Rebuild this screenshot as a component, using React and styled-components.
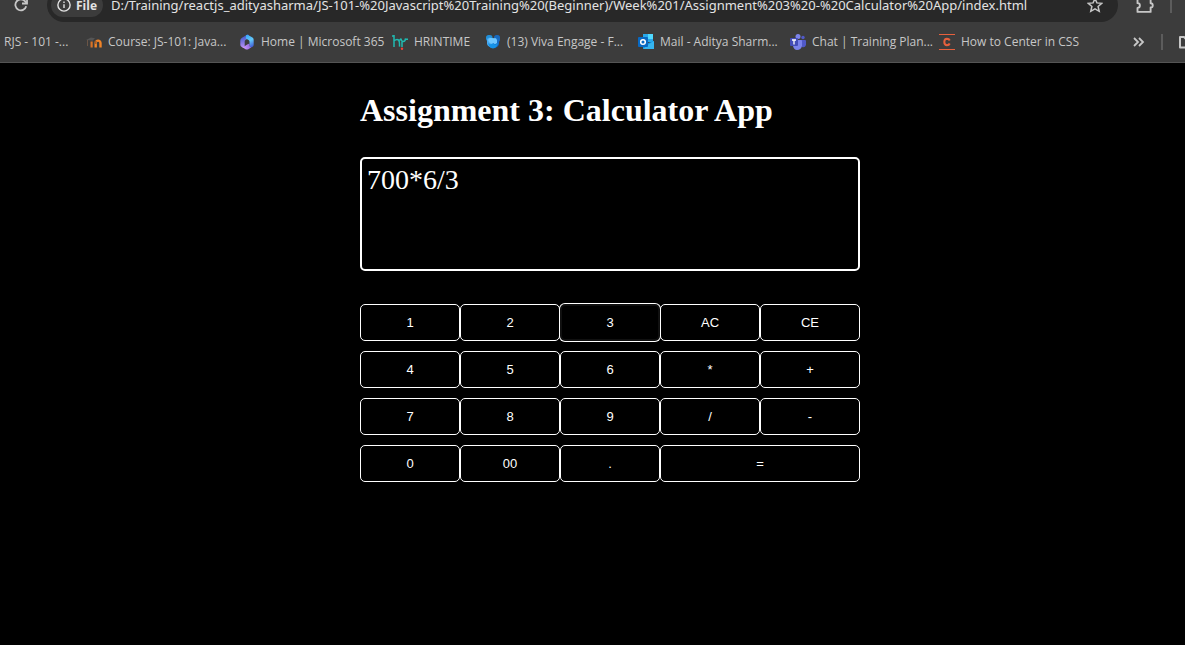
import React, { useState } from "react";
import styled, { createGlobalStyle } from "styled-components";

const GlobalStyle = createGlobalStyle`
  * { box-sizing: border-box; }
  body {
    margin: 0;
    background: #000;
    color: #fff;
    font-family: "Liberation Serif", serif;
    overflow-x: hidden;
  }
`;

const Chrome = styled.header`
  background: #3c3c3c;
  border-bottom: 1px solid #545454;
  font-family: "Open Sans", "Noto Sans", sans-serif;
  overflow: hidden;
`;

const Toolbar = styled.div`
  display: flex;
  align-items: flex-end;
  height: 22px;
`;

const IconButton = styled.button`
  display: flex;
  align-items: center;
  justify-content: center;
  flex: none;
  width: ${(p) => p.$width || 32}px;
  height: 34px;
  padding: 0;
  border: 0;
  background: none;
  color: #c7c7c7;
`;

const AddressBar = styled.div`
  display: flex;
  align-items: center;
  flex: 1;
  min-width: 0;
  height: 34px;
  margin-left: 5px;
  padding: 0 7px 0 4px;
  border-radius: 17px;
  background: #282828;
`;

const FileChip = styled.button`
  display: flex;
  align-items: center;
  gap: 5px;
  flex: none;
  width: 52px;
  height: 24px;
  padding: 0 6px;
  border: 0;
  border-radius: 12px;
  background: #3c3c3c;
  color: #e3e3e3;
  font: 700 12px "Open Sans", sans-serif;
`;

const AddressInput = styled.input`
  flex: 1;
  min-width: 0;
  height: 28px;
  margin-left: 8px;
  padding: 0;
  border: 0;
  outline: 0;
  background: none;
  color: #e3e3e3;
  font: 13px "Noto Sans", sans-serif;
`;

const Divider = styled.span`
  flex: none;
  width: 2px;
  height: 16px;
  background: #5c5c5c;
`;

const ToolbarEnd = styled.div`
  display: flex;
  align-items: center;
  gap: 9px;
  flex: none;
  width: 67px;
  height: 34px;
  padding-left: 11px;
`;

const BookmarksBar = styled.nav`
  display: flex;
  align-items: center;
  gap: 16px;
  height: 40px;
  padding-left: 4px;
  color: #c7c7c7;
`;

const Bookmark = styled.a`
  display: flex;
  align-items: center;
  gap: 6px;
  flex: none;
  color: inherit;
  font-size: 12px;
  line-height: 16px;
  text-decoration: none;
  white-space: nowrap;
`;

const BookmarkLabel = styled.span`
  width: ${(p) => p.$width}px;
`;

const BookmarksEnd = styled.div`
  display: flex;
  align-items: center;
  gap: 14px;
  flex: none;
  width: 54px;
  margin-left: auto;
  overflow: hidden;
`;

const Page = styled.main`
  display: flex;
  justify-content: center;
  padding: 29px 0 24px 35px;
`;

const Calculator = styled.section`
  width: 500px;
`;

const Title = styled.h1`
  margin: 0 0 28px;
  font-size: 32px;
  line-height: 37px;
  white-space: nowrap;
`;

const Display = styled.textarea`
  display: block;
  width: 100%;
  height: 114px;
  padding: 5px;
  border: 2px solid #fff;
  border-radius: 5px;
  outline: 0;
  resize: none;
  background: #000;
  color: #fff;
  font: 28px/32px "Liberation Serif", serif;
`;

const Keypad = styled.div`
  display: grid;
  grid-template-columns: repeat(5, 1fr);
  row-gap: 10px;
  margin-top: 33px;
`;

const Key = styled.button`
  grid-column: span ${(p) => (p.$wide ? 2 : 1)};
  position: relative;
  z-index: ${(p) => (p.$active ? 1 : 0)};
  height: 37px;
  padding: 0;
  border: ${(p) => (p.$active ? "2px solid #101010" : "1px solid #fff")};
  border-radius: 5px;
  outline: 0;
  box-shadow: ${(p) => (p.$active ? "0 0 0 1px #fff" : "none")};
  background: #000;
  color: #fff;
  font: 13px "Liberation Sans", sans-serif;
`;

const Svg = ({ size = 16, children, ...rest }) => (
  <svg width={size} height={size} viewBox="0 0 16 16" fill="none" aria-hidden="true" {...rest}>
    {children}
  </svg>
);

const ReloadIcon = () => (
  <Svg stroke="currentColor" strokeWidth="1.8">
    <path d="M13.2 9.2A5.5 5.5 0 1 1 12.2 4.4L13.5 6" />
    <path d="M14 1.5v5H9" />
  </Svg>
);

const InfoIcon = () => (
  <Svg size={14} stroke="currentColor" strokeWidth="1.6">
    <circle cx="8" cy="8" r="7" />
    <path d="M8 7.2v4.3M8 4v1.7" />
  </Svg>
);

const StarIcon = () => (
  <Svg stroke="currentColor" strokeWidth="1.5">
    <path d="M8 1.4l1.9 4.5 4.9.4-3.7 3.2 1.1 4.8L8 11.8l-4.2 2.5 1.1-4.8-3.7-3.2 4.9-.4z" />
  </Svg>
);

const ExtensionsIcon = () => (
  <Svg size={20} stroke="currentColor" strokeWidth="1.5">
    <path d="M2 3h3.6a1.6 1.6 0 0 1 3.2 0H12.500v3.600a1.700 1.700 0 0 1 0 3.400V13.500H2v-3.200a1.900 1.900 0 0 0 0-3.800z" strokeLinejoin="round" />
  </Svg>
);

const MoodleIcon = () => (
  <Svg>
    <path d="M9.700 13.500V9a2.400 2.400 0 0 1 4.800 0v4.500" stroke="#f08327" strokeWidth="2.400" />
    <path d="M5.600 13.500V7.500" stroke="#d97326" strokeWidth="2.200" />
    <path d="M0 6l5-2.500 4 .7-2.500 2.600-3-.6z" fill="#555" />
    <path d="M1.500 6v6" stroke="#6b5546" />
    <path d="M9.600 7v3" stroke="#a75d26" strokeWidth="2" />
  </Svg>
);

const Microsoft365Icon = () => (
  <Svg>
    <defs>
      <linearGradient id="m365a" x1="2" y1="1" x2="4" y2="13" gradientUnits="userSpaceOnUse">
        <stop stopColor="#3454c5" />
        <stop offset="1" stopColor="#b18cf0" />
      </linearGradient>
      <linearGradient id="m365b" x1="8" y1="1" x2="14" y2="12" gradientUnits="userSpaceOnUse">
        <stop stopColor="#3ba9f4" />
        <stop offset=".5" stopColor="#63c8fb" />
        <stop offset="1" stopColor="#4363d8" />
      </linearGradient>
      <linearGradient id="m365c" x1="3" y1="13" x2="14" y2="10" gradientUnits="userSpaceOnUse">
        <stop stopColor="#d8a2ff" />
        <stop offset="1" stopColor="#7855d6" />
      </linearGradient>
    </defs>
    <path d="M8.500.6L3 3.700Q1.300 4.700 1.300 6.500v4.200q0 1.300 1.200 2l1.200.7q2 .3 2-1.200V7.600q0-1.200 1.100-1.800L10 4V1.200Q9.400.3 8.500.6z" fill="url(#m365a)" />
    <path d="M7 1.200q1.200-.8 2.500 0l4 2.400q1.200.7 1.200 2.100v5q0 1.300-1.100 2l-1.100.6q-2-.1-2-1.700V7.400q0-1-.9-1.500L6.800 4.400z" fill="url(#m365b)" />
    <path d="M2.300 12.500q1.700 1 2.900-.1l3-1.800 2.300-1v2q0 1.600 2 1.700l-3.200 1.900q-1.400.8-2.800 0z" fill="url(#m365c)" />
  </Svg>
);

const HrIcon = () => (
  <Svg stroke="#20b9b0" strokeWidth="1.5">
    <path d="M2 1v12M2 7q3-2.500 4.800-.6.9 1 .7 6.200M9 4.500q0 3 2.200 3t2.200-3M9 4.500q-1 2-3 2M10 13V8" />
    <path d="M0 2h2M13.400 5.200H16" />
    <circle cx="10" cy="14.700" r="1.200" fill="#ed4038" stroke="none" />
  </Svg>
);

const VivaIcon = () => (
  <Svg>
    <rect x="1" y="1" width="6.500" height="6" rx="2.500" fill="#218fd8" />
    <rect x="9" y="1" width="6" height="7" rx="2.500" fill="#1769be" />
    <path d="M2 5q3-3 6 0v9q-5-1-6-4z" fill="#47a9f1" />
    <path d="M8 5q3-3 6 0v5q-1 4-6 4z" fill="#176bc4" />
    <path d="M4 8q-2-3 1-4l6 .2q2 2 1 4.800-2 2-4 0-2 2-4-1z" fill="#6ec7ff" />
    <path d="M3 9q2 2 5 .5 3 2 5-.5-1 5-5 5.500Q4 14 3 9z" fill="#1593e8" />
  </Svg>
);

const OutlookIcon = () => (
  <Svg>
    <path d="M5 0h10v8H5z" fill="#28a8ea" />
    <path d="M10 0h5v5h-5z" fill="#50d9ff" />
    <path d="M5 7l5 2 6-2v8H5z" fill="#1490df" />
    <path d="M5 15l6-5 5-3v8z" fill="#36b5ef" />
    <rect y="3" width="10" height="10" rx="1" fill="#0869c3" />
    <circle cx="5" cy="8" r="2.300" stroke="#fff" strokeWidth="1.500" />
  </Svg>
);

const TeamsIcon = () => (
  <Svg>
    <circle cx="8" cy="2.500" r="2.500" fill="#7b83eb" />
    <circle cx="13" cy="3.500" r="1.700" fill="#5059c9" />
    <path d="M10 6h5q1 0 1 1v4q-1 3-4 2z" fill="#5059c9" />
    <path d="M4 6h7q1 0 1 1v5q-1 4-5 4-3 0-4-4z" fill="#7b83eb" />
    <rect y="4" width="8" height="8" rx="1" fill="#444db7" />
    <path d="M2 6h4M4 6v4.500" stroke="#fff" strokeWidth="1.300" />
  </Svg>
);

const CssTricksIcon = () => (
  <Svg>
    <path d="M0 .5h16M0 15.500h16" stroke="#e6603d" />
    <path d="M10.700 6.500Q10 4.800 8 4.800q-2.700.1-2.700 3.200T8 11.200q2 0 2.700-1.700" stroke="#e6603d" strokeWidth="2" />
  </Svg>
);

const ChevronsIcon = () => (
  <Svg stroke="currentColor" strokeWidth="1.800">
    <path d="M3 4l4 4-4 4M8 4l4 4-4 4" />
  </Svg>
);

const FolderIcon = () => (
  <Svg stroke="currentColor" strokeWidth="2">
    <path d="M3 3h4l2 2h6v8.500H3z" strokeLinejoin="round" />
  </Svg>
);

const bookmarks = [
  { label: "RJS - 101 -...", width: 66 },
  { label: "Course: JS-101: Java...", width: 115, Icon: MoodleIcon },
  { label: "Home | Microsoft 365", width: 115, Icon: Microsoft365Icon },
  { label: "HRINTIME", width: 55, Icon: HrIcon },
  { label: "(13) Viva Engage - F...", width: 115, Icon: VivaIcon },
  { label: "Mail - Aditya Sharm...", width: 114, Icon: OutlookIcon },
  { label: "Chat | Training Plan...", width: 111, Icon: TeamsIcon },
  { label: "How to Center in CSS", width: 114, Icon: CssTricksIcon },
];

const keys = [
  "1", "2", "3", "AC", "CE",
  "4", "5", "6", "*", "+",
  "7", "8", "9", "/", "-",
  "0", "00", ".", "=",
];

const fileAddress =
  "D:/Training/reactjs_adityasharma/JS-101-%20Javascript%20Training%20(Beginner)/Week%201/Assignment%203%20-%20Calculator%20App/index.html";

function evaluate(expression) {
  const tokens = expression.match(/\d*\.?\d+|[-+*/]/g) || [];
  const terms = [];
  let operator = "+";
  tokens.forEach((token) => {
    if (/^[-+*/]$/.test(token)) {
      operator = token;
      return;
    }
    const value = Number(token);
    if (operator === "*") terms.push(terms.pop() * value);
    else if (operator === "/") terms.push(terms.pop() / value);
    else terms.push(operator === "-" ? -value : value);
  });
  return String(terms.reduce((sum, value) => sum + value, 0));
}

export default function App() {
  const [expression, setExpression] = useState("700*6/3");
  const [active, setActive] = useState("3");

  const press = (key) => {
    setActive(key);
    setExpression((current) => {
      if (key === "AC") return "";
      if (key === "CE") return current.slice(0, -1);
      if (key === "=") return evaluate(current);
      return current + key;
    });
  };

  return (
    <>
      <GlobalStyle />
      <Chrome>
        <Toolbar>
          <IconButton $width={42} aria-label="Reload"><ReloadIcon /></IconButton>
          <AddressBar>
            <FileChip><InfoIcon />File</FileChip>
            <AddressInput aria-label="Address" defaultValue={fileAddress} />
            <IconButton aria-label="Bookmark this page"><StarIcon /></IconButton>
          </AddressBar>
          <ToolbarEnd>
            <IconButton aria-label="Extensions"><ExtensionsIcon /></IconButton>
            <Divider />
          </ToolbarEnd>
        </Toolbar>
        <BookmarksBar aria-label="Bookmarks">
          {bookmarks.map(({ label, width, Icon }) => (
            <Bookmark key={label} href="#">
              {Icon && <Icon />}
              <BookmarkLabel $width={width}>{label}</BookmarkLabel>
            </Bookmark>
          ))}
          <BookmarksEnd>
            <IconButton $width={16} aria-label="More bookmarks"><ChevronsIcon /></IconButton>
            <Divider />
            <IconButton $width={16} aria-label="All bookmarks"><FolderIcon /></IconButton>
          </BookmarksEnd>
        </BookmarksBar>
      </Chrome>
      <Page>
        <Calculator>
          <Title>Assignment 3: Calculator App</Title>
          <Display aria-label="Expression" readOnly value={expression} />
          <Keypad>
            {keys.map((key) => (
              <Key key={key} $wide={key === "="} $active={key === active} onClick={() => press(key)}>
                {key}
              </Key>
            ))}
          </Keypad>
        </Calculator>
      </Page>
    </>
  );
}
